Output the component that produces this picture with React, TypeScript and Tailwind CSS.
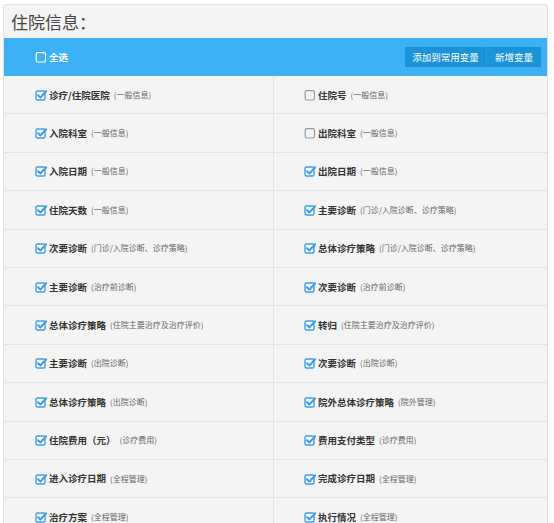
import React from "react";

type Item = { label: string; note: string; checked: boolean };

const left: Item[] = [
  { label: "诊疗/住院医院", note: "(一般信息)", checked: true },
  { label: "入院科室", note: "(一般信息)", checked: true },
  { label: "入院日期", note: "(一般信息)", checked: true },
  { label: "住院天数", note: "(一般信息)", checked: true },
  { label: "次要诊断", note: "(门诊/入院诊断、诊疗策略)", checked: true },
  { label: "主要诊断", note: "(治疗前诊断)", checked: true },
  { label: "总体诊疗策略", note: "(住院主要治疗及治疗评价)", checked: true },
  { label: "主要诊断", note: "(出院诊断)", checked: true },
  { label: "总体诊疗策略", note: "(出院诊断)", checked: true },
  { label: "住院费用（元）", note: "(诊疗费用)", checked: true },
  { label: "进入诊疗日期", note: "(全程管理)", checked: true },
  { label: "治疗方案", note: "(全程管理)", checked: true },
];

const right: Item[] = [
  { label: "住院号", note: "(一般信息)", checked: false },
  { label: "出院科室", note: "(一般信息)", checked: false },
  { label: "出院日期", note: "(一般信息)", checked: true },
  { label: "主要诊断", note: "(门诊/入院诊断、诊疗策略)", checked: true },
  { label: "总体诊疗策略", note: "(门诊/入院诊断、诊疗策略)", checked: true },
  { label: "次要诊断", note: "(治疗前诊断)", checked: true },
  { label: "转归", note: "(住院主要治疗及治疗评价)", checked: true },
  { label: "次要诊断", note: "(出院诊断)", checked: true },
  { label: "院外总体诊疗策略", note: "(院外管理)", checked: true },
  { label: "费用支付类型", note: "(诊疗费用)", checked: true },
  { label: "完成诊疗日期", note: "(全程管理)", checked: true },
  { label: "执行情况", note: "(全程管理)", checked: true },
];

function CheckedBox() {
  return (
    <svg width="12" height="12" viewBox="0 0 12 12" className="shrink-0">
      <rect x="1" y="2" width="9" height="9" rx="1.5" fill="#ffffff" stroke="#3f9de2" strokeWidth="1.4" />
      <path d="M3 6.2 L5.4 8.5 L11.2 2.2" fill="none" stroke="#3f9de2" strokeWidth="2" strokeLinecap="round" strokeLinejoin="round" />
    </svg>
  );
}

function EmptyBox({ color }: { color: string }) {
  return (
    <svg width="12" height="12" viewBox="0 0 12 12" className="shrink-0">
      <rect x="1.2" y="1.7" width="9.3" height="9.3" rx="1.5" fill="none" stroke={color} strokeWidth="1.2" />
    </svg>
  );
}

function Cell({ item, side }: { item: Item; side: "l" | "r" }) {
  return (
    <div
      className={
        side === "l"
          ? "flex h-[38.4px] items-center border-b border-r border-[#e4e4e4] pl-[31px]"
          : "flex h-[38.4px] items-center border-b border-[#e4e4e4] pl-[30px]"
      }
    >
      {item.checked ? <CheckedBox /> : <EmptyBox color="#9a9a9a" />}
      <span className="ml-[2px] text-[9.5px] font-bold text-[#333]">{item.label}</span>
      <span className="ml-[4px] text-[8px] text-[#666]">{item.note}</span>
    </div>
  );
}

export default function App() {
  return (
    <div
      className="min-h-[523px] bg-white pl-[3px] pt-[4px] pr-[6px]"
      style={{ fontFamily: '"Noto Sans CJK SC", "Noto Sans", sans-serif' }}
    >
      <div className="h-[530px] overflow-hidden rounded-t-[3px] border border-b-0 border-[#e2e2e2] bg-[#f4f4f4]">
        <div className="flex h-[33px] items-center pl-[7px] text-[17px] text-[#444]">住院信息：</div>
        <div className="flex h-[38px] items-center justify-between bg-[#3db0f6] pl-[31px] pr-[6px]">
          <div className="flex items-center">
            <EmptyBox color="#ffffff" />
            <span className="ml-[2px] text-[9.5px] font-bold text-white">全选</span>
          </div>
          <div className="flex h-[20px]">
            <button className="flex h-full w-[81px] items-center justify-center bg-[#1b93d9] text-[9.5px] text-white">
              添加到常用变量
            </button>
            <button className="flex h-full w-[55px] items-center justify-center border-l border-[#2a9ee0] bg-[#1b93d9] text-[9.5px] text-white">
              新增变量
            </button>
          </div>
        </div>
        <div className="grid grid-cols-[270px_1fr]">
          {left.map((l, i) => (
            <React.Fragment key={i}>
              <Cell item={l} side="l" />
              <Cell item={right[i]} side="r" />
            </React.Fragment>
          ))}
        </div>
      </div>
    </div>
  );
}
